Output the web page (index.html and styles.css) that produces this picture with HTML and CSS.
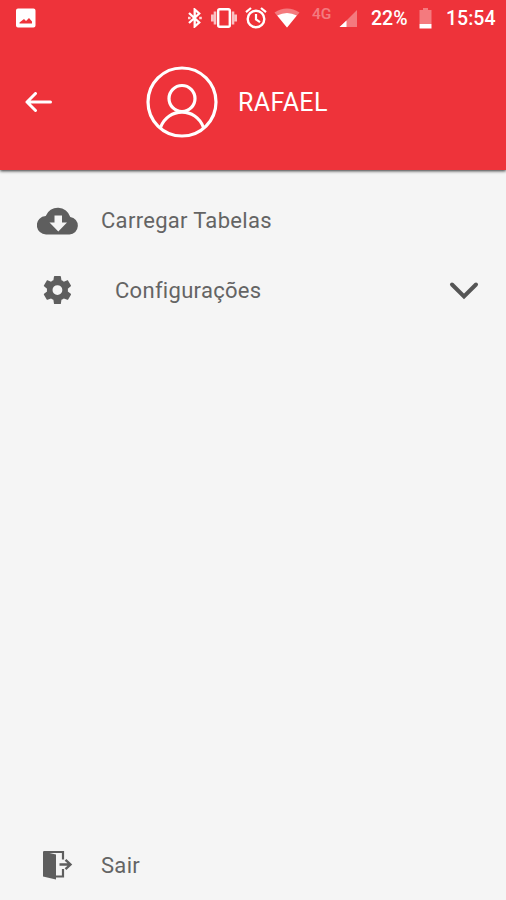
FILE: index.html
```html
<!DOCTYPE html>
<html lang="pt-BR">
  <head>
    <meta charset="UTF-8" />
    <meta name="viewport" content="width=device-width, initial-scale=1.0" />
    <title>Menu</title>
    <link rel="stylesheet" href="styles.css">
  </head>
  <body>
    <header class="header">
      <div class="status-bar">
        <svg class="icon-photo" width="20" height="20" viewBox="0 0 20 20">
          <path fill="#fff" fill-rule="evenodd" d="M2 0.5h15.500a2 2 0 0 1 2 2v15a2 2 0 0 1-2 2h-15.500a2 2 0 0 1-2-2v-15a2 2 0 0 1 2-2zM3.500 15.500h12.500v-2l-3-3.500-3 3-2-2-4.500 3.500z" />
        </svg>
        <svg class="icon-bluetooth" width="16" height="20" viewBox="0 0 16 20">
          <path fill="none" stroke="#fff" stroke-width="2.300" d="M2 5l10.200 9.500-4.500 4V1.500l4.500 4L2 15" />
          <path fill="#fff" opacity="0.8" d="M1 8.800h2.600v2.400H1zM12.200 8.800h2.600v2.400h-2.600z" />
        </svg>
        <svg class="icon-vibrate" width="26" height="20" viewBox="0 0 26 20">
          <rect x="7.200" y="1.200" width="11.600" height="17.600" rx="1.500" fill="none" stroke="#fff" stroke-width="2.400" />
          <path stroke="#fff" stroke-width="2.600" opacity="0.7" d="M4 3.500v13M22 3.500v13M1.300 6.500v7M24.700 6.500v7" />
        </svg>
        <svg class="icon-alarm" width="22" height="22" viewBox="0 0 22 22">
          <circle cx="11" cy="12" r="8.300" fill="none" stroke="#fff" stroke-width="2.400" />
          <path fill="none" stroke="#fff" stroke-width="2.200" d="M1 5.200l5-4.200M21 5.200l-5-4.200M11 7v5.500l4 2.700" />
        </svg>
        <svg class="icon-wifi" width="26" height="20" viewBox="0 0 26 20">
          <path fill="#fff" opacity="0.35" d="M0.500 4.500Q13-3.500 25.500 4.500L13 19.500z" />
          <path fill="#fff" d="M3.200 7.500Q13 2.500 22.800 7.500L13 19.500z" />
        </svg>
        <span class="network">4G</span>
        <svg class="icon-signal" width="19" height="17" viewBox="0 0 19 17">
          <path fill="#fff" opacity="0.35" d="M18 0v17H1z" />
          <path fill="#fff" d="M7.500 10.500V17H0.500z" />
        </svg>
        <span class="battery-level">22%</span>
        <svg class="icon-battery" width="13" height="21" viewBox="0 0 13 21">
          <path fill="#fff" opacity="0.35" d="M4 0h5v2h3.500v14H0.500V2H4z" />
          <path fill="#fff" d="M0.500 16h12v4.500h-12z" />
        </svg>
        <span class="clock">15:54</span>
      </div>
      <div class="profile">
        <svg class="icon-back" width="28" height="20" viewBox="0 0 28 20">
          <path fill="none" stroke="#fff" stroke-width="3" stroke-linecap="round" stroke-linejoin="round" d="M10.500 1.500L2 10l8.500 8.500M2 10h23.500" />
        </svg>
        <svg class="avatar" width="72" height="72" viewBox="0 0 72 72">
          <g fill="none" stroke="#fff" stroke-width="3.200">
            <circle cx="36" cy="36" r="34" />
            <circle cx="36" cy="32.500" r="13" />
            <path d="M14.500 61.500C22 41 50 41 57.500 61.500" />
          </g>
        </svg>
        <span class="user-name">RAFAEL</span>
      </div>
    </header>

    <main class="menu">
      <div class="menu-item">
        <svg class="menu-icon" width="42" height="29" viewBox="0 0 42 29">
          <path fill="#5e5e5e" fill-rule="evenodd" d="M9.500 28.500A9.200 9.200 0 0 1 8.700 10 13 13 0 0 1 33.300 11 8.800 8.800 0 0 1 32.500 28.500zM17.500 9.500v7h-5l8.800 9 8.700-9h-5v-7z" />
        </svg>
        <span class="menu-label">Carregar Tabelas</span>
      </div>
      <div class="menu-item">
        <svg class="menu-icon" width="42" height="34" viewBox="-4.300 -1.400 33.600 27.200">
          <path fill="#5e5e5e" transform="translate(-1.400 -1.200) scale(1.120)" d="M19.430 12.980c.04-.32.070-.64.070-.98s-.03-.66-.07-.98l2.110-1.650c.19-.15.240-.42.120-.64l-2-3.460c-.12-.22-.39-.3-.61-.22l-2.490 1c-.52-.4-1.080-.73-1.690-.98l-.38-2.650C14.460 2.180 14.250 2 14 2h-4c-.25 0-.46.180-.49.420l-.38 2.650c-.61.250-1.170.590-1.690.98l-2.490-1c-.23-.09-.49 0-.61.220l-2 3.460c-.13.220-.07.490.12.640l2.110 1.650c-.04.320-.07.650-.07.980s.03.660.07.980l-2.110 1.650c-.19.150-.24.420-.12.640l2 3.460c.12.220.39.300.61.220l2.490-1c.52.400 1.080.73 1.690.98l.38 2.650c.03.240.240.420.490.420h4c.25 0 .46-.18.490-.42l.38-2.650c.61-.25 1.170-.59 1.690-.98l2.490 1c.23.09.490 0 .61-.22l2-3.460c.12-.22.070-.49-.12-.64l-2.110-1.650zM12 15.500a3.500 3.500 0 1 1 0-7 3.500 3.500 0 0 1 0 7z" />
        </svg>
        <span class="menu-label menu-label-group">Configurações</span>
        <svg class="chevron" width="30" height="20" viewBox="0 0 30 20">
          <path fill="none" stroke="#555" stroke-width="4" stroke-linecap="round" d="M3 4.500l12 12L27 4.500" />
        </svg>
      </div>
      <div class="menu-item menu-exit">
        <svg class="menu-icon" width="42" height="30" viewBox="0 0 42 30">
          <path fill="#5e5e5e" d="M6 1.500L19 4.500V29.500L6 26.500z" />
          <path fill="none" stroke="#5e5e5e" stroke-width="2.200" d="M6.500 2h19.500v7.500M26 19v7.500h-7" />
          <path fill="none" stroke="#5e5e5e" stroke-width="2.400" d="M22.500 14.500h10M28.500 9.800l5 4.700-5 4.700" />
        </svg>
        <span class="menu-label">Sair</span>
      </div>
    </main>
  </body>
</html>
```
FILE: styles.css
```css
:root {
  --primary-color: #ee333a;
  --background-color: #f5f5f5;
  --text-color: #646464;
}
* {
  box-sizing: border-box;
  margin: 0;
  padding: 0;
}
body {
  display: flex;
  flex-direction: column;
  height: 100vh;
  font-family: Roboto, sans-serif;
  background: var(--background-color);
  color: var(--text-color);
  overflow: hidden;
}
svg {
  display: block;
  flex-shrink: 0;
}
.header {
  height: 170px;
  background: var(--primary-color);
  color: #fff;
  box-shadow: 0 1px 3px rgba(0, 0, 0, 0.8);
}
.status-bar {
  display: flex;
  align-items: center;
  height: 36px;
  padding-left: 16px;
  white-space: nowrap;
}
.icon-photo {
  margin-right: 151px;
}
.icon-bluetooth {
  margin-right: 8px;
}
.icon-vibrate {
  margin-right: 8px;
}
.icon-alarm {
  margin-right: 7px;
}
.icon-wifi {
  margin-right: 12px;
}
.network {
  width: 27px;
  margin-bottom: 8px;
  font-size: 15.500px;
  font-weight: 500;
  opacity: 0.35;
}
.battery-level {
  width: 48px;
  margin-left: 13px;
  font-size: 19.500px;
  font-weight: 500;
}
.icon-battery {
  margin-right: 14px;
}
.clock {
  font-size: 19.500px;
  font-weight: 500;
}
.profile {
  display: flex;
  align-items: center;
  height: 132px;
  padding-left: 25px;
}
.avatar {
  margin-left: 93px;
}
.user-name {
  margin-left: 20px;
  font-size: 25px;
  letter-spacing: 0.4px;
}
.menu {
  display: flex;
  flex: 1;
  flex-direction: column;
  padding: 15px 27px 0 37px;
}
.menu-item {
  display: flex;
  align-items: center;
  height: 70px;
}
.menu-label {
  margin-left: 22px;
  font-size: 22px;
  letter-spacing: 0.3px;
}
.menu-label-group {
  margin-left: 36px;
}
.chevron {
  margin-left: auto;
}
.menu-exit {
  margin-top: auto;
}
```
